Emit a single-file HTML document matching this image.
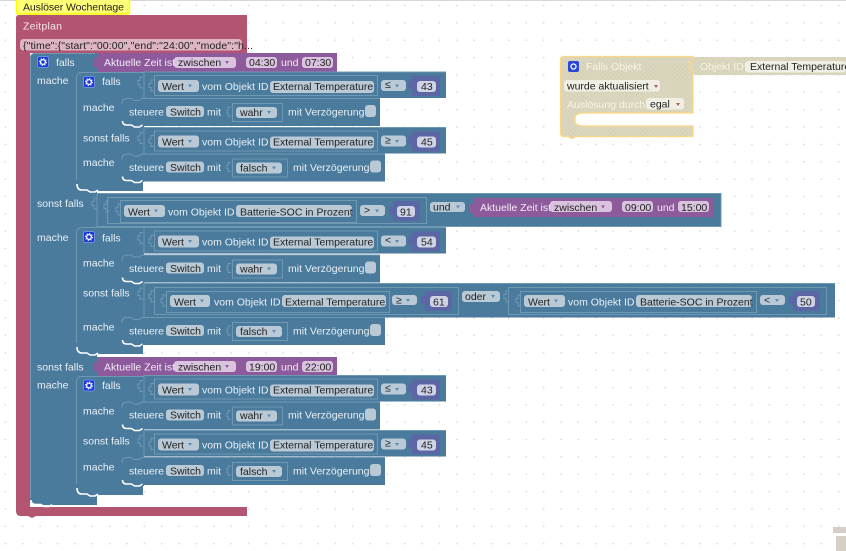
<!DOCTYPE html>
<html><head><meta charset="utf-8"><style>
html,body{margin:0;padding:0;background:#fff;width:846px;height:551px;overflow:hidden}
svg{display:block;font-family:"Liberation Sans",sans-serif;font-size:10.5px}
.b{fill:#4a7a9c}.o{fill:none;stroke:#6f98b3;stroke-width:1}.l{fill:none;stroke:#6f98b3;stroke-width:1}
.w{fill:none;stroke:#fff;stroke-width:1.6}
.f{fill:#b9cad6}.n{fill:#5b67a5}.nf{fill:#d0d3e6}.p{fill:#8d5a9c}.pf{fill:#d9c3df}
.t{fill:#e9f0f4}.d{fill:#222}.a{fill:#5a8cb0}.pa{fill:#8d5a9c}
.y{fill:#f7f3e4}
</style></head><body>
<svg width="846" height="551" viewBox="0 0 846 551" xmlns="http://www.w3.org/2000/svg">
<defs>
<pattern id="g" x="5" y="5" width="17.36" height="17.36" patternUnits="userSpaceOnUse"><circle cx="0.5" cy="0.5" r="0.9" fill="#dcdcdc"/><circle cx="17.86" cy="0.5" r="0.9" fill="#dcdcdc"/><circle cx="0.5" cy="17.86" r="0.9" fill="#dcdcdc"/></pattern>
<pattern id="h" width="3" height="3" patternUnits="userSpaceOnUse" patternTransform="rotate(45)"><rect width="3" height="3" fill="#dbd7bf"/><rect width="1.500" height="1.500" fill="#d3cfb4"/></pattern>
<path id="tri" d="M-2 -1.5h4l-2 3z"/>
<g id="gear"><rect x="0.5" y="0.5" width="11" height="11" rx="2" fill="#1838d8" stroke="#6f8fe0"/><circle cx="6" cy="6" r="2.4" fill="none" stroke="#fff" stroke-width="1.3"/><circle cx="6" cy="6" r="3.5" fill="none" stroke="#fff" stroke-width="1.1" stroke-dasharray="1.2 1.55"/></g>
<path id="br" class="l" d="M6 3H3V6.5H1V10.500H3V14H6"/>
<g id="vr">
<rect class="b" x="144" y="0" width="302" height="26"/>
<path class="l" d="M144 26V0H446"/>
<use href="#br" x="137" y="2"/><use href="#br" x="148" y="5"/>
<rect class="o" x="154.500" y="3.500" width="223" height="20"/>
<rect class="f" x="158" y="8" width="41" height="12" rx="3"/>
<use href="#tri" x="190" y="14" class="a"/>
<rect class="f" x="270" y="9" width="104" height="12" rx="3"/>
<rect class="f" x="381" y="8" width="25" height="11" rx="3"/>
<use href="#tri" x="397" y="14" class="a"/>
<rect class="n" x="408" y="9" width="4" height="8" rx="1.500"/>
<rect class="n" x="412" y="4" width="28" height="20"/>
<rect class="nf" x="417" y="9" width="19" height="11" rx="3"/>
</g>
<g id="s1">
<path class="b" d="M122 4q0-4 4-4h254v28H126q-4 0-4-4z"/>
<path class="l" d="M122 6q0-5.500 5-5.500h4l3 2h5l3-2H380"/>
<path class="w" d="M122.500 23q0 4 4 4h5l3 2h5l3-2"/>
<rect class="o" x="232.500" y="5.500" width="50" height="18"/>
<rect class="f" x="166" y="8" width="38" height="11" rx="3"/>
<rect class="f" x="236" y="9" width="41" height="11" rx="3"/>
<use href="#tri" x="269" y="14.500" class="a"/>
<path class="l" d="M231 9h-3v3h-1v3h1v3h3"/>
<rect class="f" x="365" y="7" width="11" height="12" rx="3"/>
</g>
<g id="s2">
<path class="b" d="M122 4q0-4 4-4h259v28H126q-4 0-4-4z"/>
<path class="l" d="M122 6q0-5.500 5-5.500h4l3 2h5l3-2H385"/>
<path class="w" d="M122.500 23q0 4 4 4h5l3 2h5l3-2"/>
<rect class="o" x="232.500" y="5.500" width="55" height="18"/>
<rect class="f" x="166" y="8" width="38" height="11" rx="3"/>
<rect class="f" x="236" y="9" width="46" height="11" rx="3"/>
<use href="#tri" x="274" y="14.500" class="a"/>
<path class="l" d="M231 9h-3v3h-1v3h1v3h3"/>
<rect class="f" x="370" y="7" width="11" height="12" rx="3"/>
</g>
<g id="inner">
<path class="b" d="M76 78q0-6 6-6h62v110h-1v9H82q-6 0-6-6z"/>
<path class="l" d="M76.500 180V78q0-5.500 5.500-5.500h62"/>
<path class="w" d="M77 184q0 6 5 6h5l3 2h5l3-2"/>
</g>
<g id="pur">
<rect class="p" x="97" y="0" width="240" height="19"/>
<path class="p" d="M97 5h-4v9h4z"/>
<rect class="pf" x="174" y="4" width="62" height="11" rx="3"/>
<use href="#tri" x="227" y="9.500" class="pa"/>
<rect class="pf" x="246" y="4" width="31" height="11" rx="3"/>
<rect class="pf" x="302" y="4" width="31" height="11" rx="3"/>
</g>
</defs>

<rect width="846" height="551" fill="#fff"/>
<rect width="846" height="551" fill="url(#g)"/>
<rect width="846" height="1" fill="#d6d6d6"/>

<!-- comment -->
<path d="M27 14h10l-5 3.500z" fill="#ffff66"/>
<rect x="16.500" y="-2" width="113" height="16" rx="2" fill="#ffff77" stroke="#ffff00" stroke-width="1.500"/>
<text x="23" y="10.500" fill="#222" textLength="101">Auslöser Wochentage</text>

<!-- maroon -->
<path d="M16 18q0-3 3-3H247V53H30V507H247V516H36l-4 2-4-2H21q-5 0-5-5z" fill="#b35570"/>
<rect x="20" y="39" width="222" height="11.500" rx="3.500" fill="#deb5c2"/>
<text x="23" y="29.500" fill="#f4e6ea" textLength="39">Zeitplan</text>
<text x="23" y="49" fill="#222" textLength="230">{"time":{"start":"00:00","end":"24:00","mode":"h...</text>

<!-- outer blue -->
<path class="b" d="M30 58q0-5 5-5H97V495V505H36q-6 0-6-5z"/>
<path class="l" d="M30.500 498V58q0-4.500 4.500-4.500h60"/>
<path class="w" d="M31 500q0 4.500 5 4.500h5l3 2h5l3-2"/>
<use href="#gear" x="37" y="56"/>
<text class="t" x="56" y="66">falls</text>
<text class="t" x="37" y="84">mache</text>
<text class="t" x="37" y="207">sonst falls</text>
<text class="t" x="37" y="241">mache</text>
<text class="t" x="37" y="370.500">sonst falls</text>
<text class="t" x="37" y="388.500">mache</text>

<!-- purple 1 -->
<use href="#pur" y="53"/>
<text x="104" y="66" style="fill:#f3ebf5" textLength="71">Aktuelle Zeit ist</text>
<text class="d" x="178" y="66">zwischen</text>
<text class="d" x="249" y="66">04:30</text>
<text style="fill:#f3ebf5" x="281" y="66">und</text>
<text class="d" x="305" y="66">07:30</text>

<!-- section 1 -->
<use href="#inner"/>
<use href="#gear" x="83" y="76"/>
<text class="t" x="102" y="85">falls</text>
<text class="t" x="83" y="111">mache</text>
<text class="t" x="83" y="141.500">sonst falls</text>
<text class="t" x="83" y="166">mache</text>

<use href="#vr" y="72"/>
<text class="d" x="162" y="90">Wert</text><text class="t" x="202" y="90">vom Objekt ID</text><text class="d" x="273" y="90">External Temperature</text><text class="d" x="385" y="88">≤</text><text class="d" x="421" y="90">43</text>
<use href="#vr" y="127.500"/>
<text class="d" x="162" y="145.500">Wert</text><text class="t" x="202" y="145.500">vom Objekt ID</text><text class="d" x="273" y="145.500">External Temperature</text><text class="d" x="385" y="143.500">≥</text><text class="d" x="421" y="145.500">45</text>

<use href="#s1" y="98"/>
<text class="t" x="129" y="115.500">steuere</text><text class="d" x="170" y="115.500">Switch</text><text class="t" x="207" y="115.500">mit</text><text class="d" x="240" y="116">wahr</text><text class="t" x="288" y="115.500">mit Verzögerung</text>
<use href="#s2" y="153.500"/>
<text class="t" x="129" y="171">steuere</text><text class="d" x="170" y="171">Switch</text><text class="t" x="207" y="171">mit</text><text class="d" x="240" y="171.500">falsch</text><text class="t" x="293" y="171">mit Verzögerung</text>

<!-- sonst falls row big -->
<rect class="b" x="97" y="193" width="624" height="34"/>
<path class="l" d="M97 227V193.500H721"/>
<path d="M97 226.500H721V193" fill="none" stroke="#6f98b3"/>
<use href="#br" x="91" y="195"/><use href="#br" x="103" y="198"/><use href="#br" x="115" y="201"/>
<rect class="o" x="107.500" y="197.500" width="319" height="26"/>
<rect class="o" x="120.500" y="200.500" width="236" height="22"/>
<rect class="f" x="124" y="205" width="41" height="12" rx="3"/><use href="#tri" x="156" y="211" class="a"/>
<text class="d" x="128" y="215.500">Wert</text><text class="t" x="168" y="215.500">vom Objekt ID</text>
<rect class="f" x="236" y="205" width="116" height="12" rx="3"/><text class="d" x="240" y="215.500">Batterie-SOC in Prozent</text>
<rect class="f" x="360" y="205" width="25" height="11" rx="3"/><use href="#tri" x="377" y="211" class="a"/><text class="d" x="364" y="213.500">&gt;</text>
<rect class="n" x="389" y="207" width="4" height="8"/>
<rect class="n" x="393" y="201" width="27" height="20"/><rect class="nf" x="397" y="206" width="18" height="11" rx="3"/><text class="d" x="400" y="215.500">91</text>
<rect class="f" x="430" y="202" width="35" height="10" rx="3"/><text class="d" x="433" y="210.500">und</text><use href="#tri" x="458" y="207" class="a"/>
<path class="p" d="M473 198h241v19H473v-4h-4v-9h4z"/>
<text style="fill:#f3ebf5" x="480" y="211" textLength="71">Aktuelle Zeit ist</text>
<rect class="pf" x="550" y="201" width="62" height="11" rx="3"/><text class="d" x="554" y="211">zwischen</text><use href="#tri" x="603" y="207" class="pa"/>
<rect class="pf" x="622" y="201" width="31" height="11" rx="3"/><text class="d" x="625" y="211">09:00</text>
<text style="fill:#f3ebf5" x="657" y="211">und</text>
<rect class="pf" x="678" y="201" width="31" height="11" rx="3"/><text class="d" x="681" y="211">15:00</text>

<!-- section 2 -->
<path class="b" d="M76 233q0-6 6-6h62v118h-1v9H82q-6 0-6-6z"/>
<path class="l" d="M76.500 343V233q0-5.500 5.500-5.500h62"/>
<path class="w" d="M77 347q0 6 5 6h5l3 2h5l3-2"/>
<use href="#gear" x="83" y="231"/>
<text class="t" x="102" y="241.500">falls</text>
<text class="t" x="83" y="266.500">mache</text>
<text class="t" x="83" y="296.500">sonst falls</text>
<text class="t" x="83" y="330.500">mache</text>

<use href="#vr" y="227.500"/>
<text class="d" x="162" y="245.500">Wert</text><text class="t" x="202" y="245.500">vom Objekt ID</text><text class="d" x="273" y="245.500">External Temperature</text><text class="d" x="385" y="243.500">&lt;</text><text class="d" x="421" y="245.500">54</text>

<use href="#s1" y="254.500"/>
<text class="t" x="129" y="272">steuere</text><text class="d" x="170" y="272">Switch</text><text class="t" x="207" y="272">mit</text><text class="d" x="240" y="272.500">wahr</text><text class="t" x="288" y="272">mit Verzögerung</text>

<rect class="b" x="144" y="283" width="691" height="34.500"/>
<path class="l" d="M144 317V283.500H835"/>
<use href="#br" x="137" y="285"/><use href="#br" x="148" y="288"/><use href="#br" x="160" y="292"/>
<rect class="o" x="154.500" y="287.500" width="304" height="27"/>
<rect class="o" x="166.500" y="291.500" width="223" height="21"/>
<rect class="f" x="170" y="295" width="40" height="12" rx="3"/><use href="#tri" x="202" y="301" class="a"/>
<text class="d" x="174" y="305.500">Wert</text><text class="t" x="214" y="305.500">vom Objekt ID</text>
<rect class="f" x="282" y="295" width="104" height="12" rx="3"/><text class="d" x="285" y="305.500">External Temperature</text>
<rect class="f" x="392" y="295" width="25" height="10" rx="3"/><text class="d" x="396" y="303.500">≥</text><use href="#tri" x="408" y="300.500" class="a"/>
<rect class="n" x="421" y="296" width="4" height="8"/>
<rect class="n" x="425" y="291" width="27" height="20"/><rect class="nf" x="430" y="296" width="18" height="11" rx="3"/><text class="d" x="433" y="305.500">61</text>
<rect class="f" x="462" y="291" width="38" height="11" rx="3"/><text class="d" x="465" y="300">oder</text><use href="#tri" x="493" y="296.500" class="a"/>
<use href="#br" x="503" y="288"/><use href="#br" x="515" y="292"/>
<rect class="o" x="508.500" y="287.500" width="318" height="27"/>
<rect class="o" x="520.500" y="291.500" width="236" height="21"/>
<rect class="f" x="524" y="295" width="41" height="12" rx="3"/><use href="#tri" x="556" y="301" class="a"/>
<text class="d" x="528" y="305.500">Wert</text><text class="t" x="568" y="305.500">vom Objekt ID</text>
<rect class="f" x="636" y="295" width="116" height="12" rx="3"/><text class="d" x="640" y="305.500">Batterie-SOC in Prozent</text>
<rect class="f" x="760" y="295" width="25" height="10" rx="3"/><text class="d" x="764" y="303.500">&lt;</text><use href="#tri" x="777" y="300.500" class="a"/>
<rect class="n" x="789" y="296" width="4" height="8"/>
<rect class="n" x="793" y="291" width="27" height="20"/><rect class="nf" x="797" y="296" width="18" height="11" rx="3"/><text class="d" x="800" y="305.500">50</text>

<use href="#s2" y="317"/>
<text class="t" x="129" y="334.500">steuere</text><text class="d" x="170" y="334.500">Switch</text><text class="t" x="207" y="334.500">mit</text><text class="d" x="240" y="335">falsch</text><text class="t" x="293" y="334.500">mit Verzögerung</text>

<!-- purple 2 -->
<use href="#pur" y="357"/>
<text style="fill:#f3ebf5" x="104" y="370.500" textLength="71">Aktuelle Zeit ist</text>
<text class="d" x="178" y="370.500">zwischen</text>
<text class="d" x="249" y="370.500">19:00</text>
<text style="fill:#f3ebf5" x="281" y="370.500">und</text>
<text class="d" x="305" y="370.500">22:00</text>

<!-- section 3 -->
<use href="#inner" y="304"/>
<use href="#gear" x="83" y="379.500"/>
<text class="t" x="102" y="389">falls</text>
<text class="t" x="83" y="414.500">mache</text>
<text class="t" x="83" y="444.500">sonst falls</text>
<text class="t" x="83" y="470.500">mache</text>

<use href="#vr" y="375.500"/>
<text class="d" x="162" y="393.500">Wert</text><text class="t" x="202" y="393.500">vom Objekt ID</text><text class="d" x="273" y="393.500">External Temperature</text><text class="d" x="385" y="391.500">≤</text><text class="d" x="421" y="393.500">43</text>
<use href="#vr" y="430.500"/>
<text class="d" x="162" y="448.500">Wert</text><text class="t" x="202" y="448.500">vom Objekt ID</text><text class="d" x="273" y="448.500">External Temperature</text><text class="d" x="385" y="446.500">≥</text><text class="d" x="421" y="448.500">45</text>

<use href="#s1" y="401.500"/>
<text class="t" x="129" y="418.500">steuere</text><text class="d" x="170" y="418.500">Switch</text><text class="t" x="207" y="418.500">mit</text><text class="d" x="240" y="419">wahr</text><text class="t" x="288" y="418.500">mit Verzögerung</text>
<use href="#s2" y="457"/>
<text class="t" x="129" y="474.500">steuere</text><text class="d" x="170" y="474.500">Switch</text><text class="t" x="207" y="474.500">mit</text><text class="d" x="240" y="475">falsch</text><text class="t" x="293" y="474.500">mit Verzögerung</text>

<!-- orange disabled block -->
<path d="M563 56.500H693V113H584q-9 0-9 5v3q0 5 9 5H693V136.500H576l-4 2-4-2h-4q-3.500 0-3.500-4V60q0-3.500 3.500-3.500z" fill="url(#h)" stroke="#fdd685" stroke-width="1.300"/>
<rect x="693" y="57" width="153" height="18" fill="url(#h)"/>
<path d="M693 57v5h-4v8h4v5" fill="#dbd7bf" stroke="#fdd685"/>
<rect x="568" y="61" width="11" height="11" rx="2" fill="#2a48d8"/>
<circle cx="573.500" cy="66.500" r="2.500" fill="none" stroke="#fff" stroke-width="1.300"/>
<text class="y" x="586" y="70">Falls Objekt</text>
<text class="y" x="700" y="70">Objekt ID</text>
<rect x="745" y="61" width="101" height="11.500" rx="3" fill="#f0efe4"/>
<text class="d" x="750" y="70">External Temperature</text>
<rect x="564" y="80" width="96" height="11.500" rx="3" fill="#f0efe4"/>
<text class="d" x="567" y="89.500">wurde aktualisiert</text>
<path d="M654 85h4l-2 3z" fill="#b35570"/>
<text class="y" x="567" y="108">Auslösung durch</text>
<rect x="646" y="98" width="38" height="11.500" rx="3" fill="#f0efe4"/>
<text class="d" x="650" y="107.500">egal</text>
<path d="M676 103h4l-2 3z" fill="#b35570"/>

<!-- corner -->
<rect x="833" y="527" width="13" height="6" fill="#d5cfc8"/>
<rect x="836" y="536" width="10" height="15" fill="#d5cfc8"/>
</svg>
</body></html>
